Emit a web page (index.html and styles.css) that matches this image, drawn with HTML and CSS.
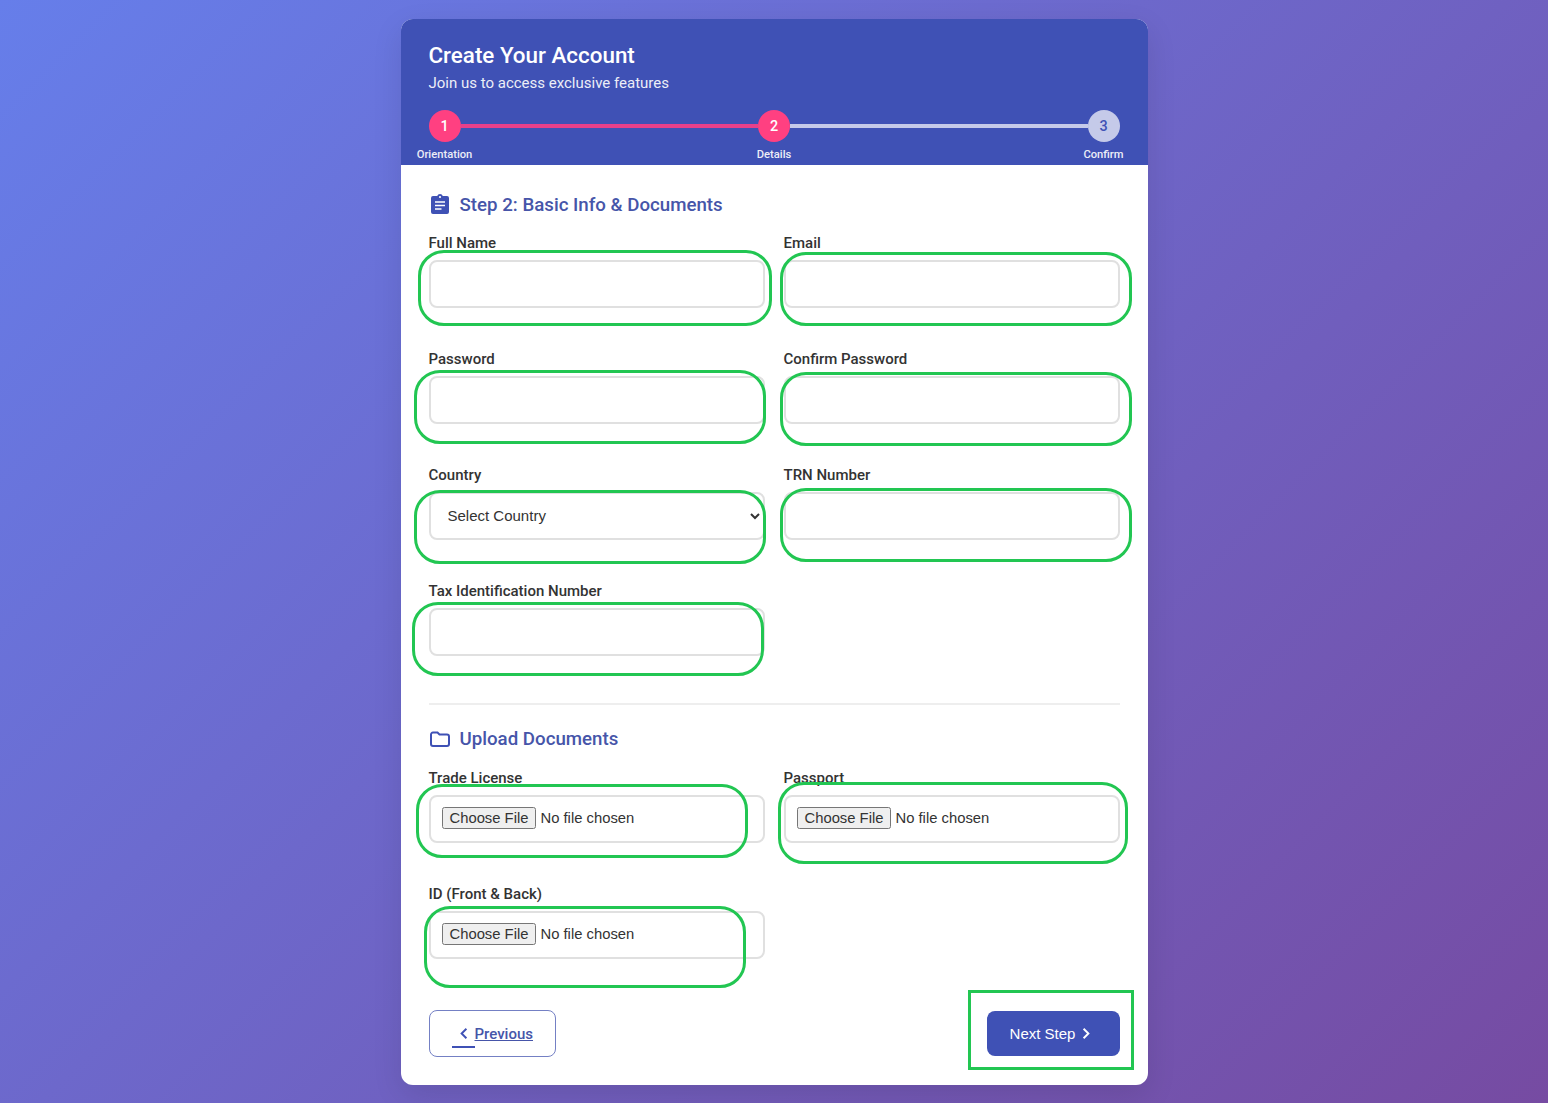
FILE: index.html
```html
<!DOCTYPE html>
<html lang="en">
<head>
  <meta charset="UTF-8" />
  <meta name="viewport" content="width=device-width, initial-scale=1.0"/>
  <title>Create Your Account</title>
  <link rel="stylesheet" href="styles.css">
</head>
<body>

  <div class="card">
    <div class="card-header">
      <h1>Create Your Account</h1>
      <p>Join us to access exclusive features</p>

      <div class="stepper">
        <div class="step done">
          <div class="step-num">1</div>
          <div class="step-label">Orientation</div>
        </div>
        <div class="step-line done"></div>
        <div class="step done">
          <div class="step-num">2</div>
          <div class="step-label">Details</div>
        </div>
        <div class="step-line"></div>
        <div class="step">
          <div class="step-num">3</div>
          <div class="step-label">Confirm</div>
        </div>
      </div>
    </div>

    <form class="card-body" onsubmit="return false">
      <h2 class="section-title">
        <svg class="icon-clipboard" viewBox="0 0 18 20" width="18" height="20">
          <path fill="#3f51b5" d="M9 0a3 3 0 0 1 2.8 2H16a2 2 0 0 1 2 2v14a2 2 0 0 1-2 2H2a2 2 0 0 1-2-2V4a2 2 0 0 1 2-2h4.200A3 3 0 0 1 9 0z"/>
          <circle fill="#fff" cx="9" cy="3" r="1.100"/>
          <path stroke="#fff" stroke-width="1.600" d="M4 8h10M4 11.500h10M4 15h6.500"/>
        </svg>
        Step 2: Basic Info &amp; Documents
      </h2>

      <div class="form-grid">
        <div class="form-group">
          <label for="name">Full Name</label>
          <input id="name" type="text" />
        </div>
        <div class="form-group">
          <label for="email">Email</label>
          <input id="email" type="email" />
        </div>
        <div class="form-group">
          <label for="password">Password</label>
          <input id="password" type="password" />
        </div>
        <div class="form-group">
          <label for="confirm">Confirm Password</label>
          <input id="confirm" type="password" />
        </div>
        <div class="form-group">
          <label for="country">Country</label>
          <select id="country">
            <option value="">Select Country</option>
          </select>
        </div>
        <div class="form-group">
          <label for="trn">TRN Number</label>
          <input id="trn" type="text" />
        </div>
        <div class="form-group">
          <label for="tin">Tax Identification Number</label>
          <input id="tin" type="text" />
        </div>
      </div>

      <hr class="divider" />

      <h2 class="section-title">
        <svg class="icon-folder" viewBox="0 0 20 16" width="20" height="16">
          <path fill="none" stroke="#3f51b5" stroke-width="2" d="M3 1.500h4.500l2 2H17a2 2 0 0 1 2 2V13a2 2 0 0 1-2 2H3a2 2 0 0 1-2-2V3.500a2 2 0 0 1 2-2z"/>
        </svg>
        Upload Documents
      </h2>

      <div class="form-grid">
        <div class="form-group">
          <label for="license">Trade License</label>
          <input id="license" type="file" />
        </div>
        <div class="form-group">
          <label for="passport">Passport</label>
          <input id="passport" type="file" />
        </div>
        <div class="form-group">
          <label for="idcard">ID (Front &amp; Back)</label>
          <input id="idcard" type="file" />
        </div>
      </div>

      <div class="form-actions">
        <a class="btn-prev" href="#">
          <svg viewBox="0 0 10 16" width="8" height="13">
            <path fill="none" stroke="#3f51b5" stroke-width="2.400" d="M8 2L2 8l6 6"/>
          </svg>
          <span>Previous</span>
        </a>
        <button class="btn-next" type="submit">
          Next Step
          <svg viewBox="0 0 10 16" width="8" height="13">
            <path fill="none" stroke="#fff" stroke-width="2.400" d="M2 2l6 6-6 6"/>
          </svg>
        </button>
      </div>
    </form>
  </div>

  <!-- green review marks drawn over the fields -->
  <div class="mark mark-name"></div>
  <div class="mark mark-email"></div>
  <div class="mark mark-password"></div>
  <div class="mark mark-confirm"></div>
  <div class="mark mark-country"></div>
  <div class="mark mark-trn"></div>
  <div class="mark mark-tin"></div>
  <div class="mark mark-license"></div>
  <div class="mark mark-passport"></div>
  <div class="mark mark-idcard"></div>
  <div class="mark mark-next"></div>

</body>
</html>
```

FILE: styles.css
```css
* {
  box-sizing: border-box;
}

body {
  margin: 0;
  min-height: 1103px;
  padding: 19px 0 18px;
  display: flex;
  justify-content: center;
  font-family: 'Roboto', sans-serif;
  background: linear-gradient(135deg, #667eea, #764ba2);
  color: #333;
}

.card {
  width: 747px;
  background: #fff;
  border-radius: 12px;
  overflow: hidden;
  box-shadow: 0 10px 30px rgba(0, 0, 0, 0.1);
}

.card-header {
  background: #3f51b5;
  color: #fff;
  padding: 23px 28px 0;
  height: 146px;
}

.card-header h1 {
  margin: 0;
  font-size: 22.4px;
  line-height: 26px;
  font-weight: 500;
}

.card-header p {
  margin: 6px 0 0;
  font-size: 15px;
  line-height: 18px;
  opacity: 0.9;
}

.stepper {
  display: flex;
  margin-top: 18px;
}

.step {
  width: 32px;
  display: flex;
  flex-direction: column;
  align-items: center;
}

.step-num {
  width: 32px;
  height: 32px;
  border-radius: 50%;
  background: #c5cae9;
  color: #3f51b5;
  display: flex;
  align-items: center;
  justify-content: center;
  font-size: 14.4px;
  font-weight: 500;
}

.step.done .step-num {
  background: #ff4081;
  color: #fff;
}

.step-label {
  margin-top: 6px;
  font-size: 11.2px;
  line-height: 14px;
  font-weight: 500;
  white-space: nowrap;
  opacity: 0.9;
}

.step-line {
  flex: 1;
  height: 4px;
  margin-top: 14px;
  background: #c5cae9;
}

.step-line.done {
  background: #e8408a;
}

.card-body {
  padding: 29px 28px 28px;
}

.section-title {
  margin: 0 0 17px;
  display: flex;
  align-items: center;
  gap: 10px;
  font-size: 18.7px;
  line-height: 23px;
  font-weight: 500;
  color: #4655a9;
}

.divider + .section-title {
  margin-bottom: 18px;
}

.icon-clipboard {
  margin: -3px 1px 0 2px;
}

.icon-folder {
  margin: -2px 0 0 1px;
}

.form-grid {
  display: grid;
  grid-template-columns: 336px 336px;
  column-gap: 19px;
  row-gap: 42px;
}

.form-group label {
  display: block;
  margin-bottom: 8px;
  font-size: 15px;
  line-height: 18px;
  font-weight: 500;
  color: #333;
}

.form-group input,
.form-group select {
  display: block;
  width: 100%;
  height: 48px;
  padding: 11px 13px 13px;
  border: 2px solid #e0e0e0;
  border-radius: 8px;
  background: #fff;
  font-size: 15px;
  font-family: 'Liberation Sans', sans-serif;
  color: #333;
}

.form-group input[type="file"] {
  padding: 10px 11px;
  font-size: 14.8px;
}

.form-group input[type="file"]::file-selector-button {
  color: #333;
}

.divider {
  margin: 47px 0 23px;
  border: none;
  border-top: 2px solid #eee;
}

.form-actions {
  display: flex;
  justify-content: space-between;
  align-items: center;
  margin-top: 51px;
}

.btn-prev {
  position: relative;
  display: flex;
  align-items: center;
  gap: 7px;
  width: 127px;
  height: 47px;
  padding-left: 30px;
  border: 1px solid #7480c4;
  border-radius: 8px;
  font-size: 15px;
  font-weight: 500;
  color: #4655a9;
}

.btn-prev::after {
  content: "";
  position: absolute;
  left: 22px;
  bottom: 8px;
  width: 23px;
  height: 2px;
  background: #3f51b5;
}

.btn-next {
  display: flex;
  align-items: center;
  justify-content: center;
  gap: 7px;
  width: 133px;
  height: 45px;
  padding: 0 6px 0 0;
  border: none;
  border-radius: 8px;
  background: #3f51b5;
  color: #fff;
  font-size: 15px;
  font-family: 'Liberation Sans', sans-serif;
}

.mark {
  position: absolute;
  border: 3px solid #22c652;
  border-radius: 26px;
}

.mark-name { left: 418px; top: 250px; width: 354px; height: 76px; }
.mark-email { left: 780px; top: 252px; width: 352px; height: 74px; }
.mark-password { left: 414px; top: 370px; width: 352px; height: 74px; }
.mark-confirm { left: 780px; top: 372px; width: 352px; height: 74px; }
.mark-country { left: 414px; top: 490px; width: 352px; height: 74px; }
.mark-trn { left: 780px; top: 488px; width: 352px; height: 74px; }
.mark-tin { left: 412px; top: 602px; width: 352px; height: 74px; }
.mark-license { left: 416px; top: 784px; width: 332px; height: 74px; }
.mark-passport { left: 778px; top: 782px; width: 350px; height: 82px; }
.mark-idcard { left: 424px; top: 906px; width: 322px; height: 82px; }
.mark-next { left: 968px; top: 990px; width: 166px; height: 80px; border-radius: 0; }
```
